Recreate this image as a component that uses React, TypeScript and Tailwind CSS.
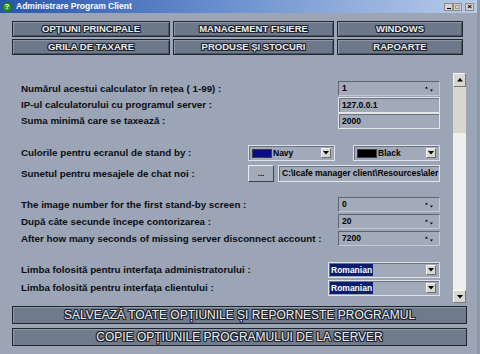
import React from "react";

const OUT =
  "[text-shadow:1px_0_0_#1d222b,-1px_0_0_#1d222b,0_1px_0_#1d222b,0_-1px_0_#1d222b,1px_1px_0_#1d222b,-1px_-1px_0_#1d222b,1px_-1px_0_#1d222b,-1px_1px_0_#1d222b]";

function TabBtn({ children }: { children: React.ReactNode }) {
  return (
    <div
      className={`h-[16px] flex items-center justify-center bg-[#6d788a] border border-[#232830] shadow-[inset_1px_1px_0_#8d97a7,inset_-1px_-1px_0_#4a5361] text-[#e9edf2] font-bold text-[9.5px] leading-none ${OUT}`}
    >
      {children}
    </div>
  );
}

function SpinArrows() {
  return (
    <svg width="10" height="8" viewBox="0 0 10 8" className="shrink-0">
      <path d="M1 3.5 L2.5 1.5 L4 3.5Z" fill="#000" />
      <path d="M6 4.5 L7.5 6.5 L9 4.5Z" fill="#000" />
    </svg>
  );
}

function DropBtn() {
  return (
    <div className="w-[10px] h-[10px] bg-[#d9d8d3] border-t border-l border-[#f4f4f2] border-r border-b border-r-[#6b6b6b] border-b-[#6b6b6b] flex items-center justify-center shrink-0">
      <svg width="6" height="4" viewBox="0 0 6 4">
        <path d="M0 0 L6 0 L3 3.5Z" fill="#000" />
      </svg>
    </div>
  );
}

function Spin({ value }: { value: string }) {
  return (
    <div className="w-[102px] h-[15px] bg-[#a3abba] border-t border-l border-[#5d6573] border-r border-b border-r-[#c4cad4] border-b-[#c4cad4] flex items-center pl-[3px] pr-[5px] justify-between">
      <span className="text-[8.5px] font-bold text-black leading-none">{value}</span>
      <SpinArrows />
    </div>
  );
}

function Edit({ value }: { value: string }) {
  return (
    <div className="w-[102px] h-[16px] bg-[#a2aab9] border border-[#e3e6eb] shadow-[inset_1px_1px_0_#6b7380] flex items-center pl-[3px]">
      <span className="text-[8.5px] font-bold text-black leading-none">{value}</span>
    </div>
  );
}

function ColorCombo({ swatch, label }: { swatch: string; label: string }) {
  return (
    <div className="w-[87px] h-[16px] bg-[#a2aab9] border border-[#dfe3e9] shadow-[inset_1px_1px_0_#6b7380] flex items-center pl-[3px] pr-[3px] gap-[1px]">
      <div className={`w-[20px] h-[9px] ${swatch} border border-[#3a3f48]`} />
      <span className="flex-1 text-[8.5px] font-bold text-black leading-none">{label}</span>
      <DropBtn />
    </div>
  );
}

function LangCombo() {
  return (
    <div className="w-[112px] h-[16px] bg-[#a2aab9] border border-[#dfe3e9] shadow-[inset_1px_1px_0_#6b7380] flex items-center pl-[1px] pr-[3px]">
      <div className="flex-1 flex">
        <span className="bg-[#0a1d6e] text-white text-[8.5px] font-bold leading-none px-[1px] py-[1.5px]">
          Romanian
        </span>
      </div>
      <DropBtn />
    </div>
  );
}

function Label({ children }: { children: React.ReactNode }) {
  return (
    <span className="flex-1 whitespace-nowrap text-[9.8px] font-bold text-[#0b0d12] leading-none">
      {children}
    </span>
  );
}

export default function App() {
  return (
    <div className="w-[480px] h-[354px] overflow-hidden bg-[#9ca5b6] flex flex-col font-['Liberation_Sans',Arial,sans-serif] border-r-[3px] border-[#8e97a8]">
      {/* Title bar */}
      <div className="h-[13px] shrink-0 bg-gradient-to-r from-[#2856ae] via-[#6f93cf] to-[#b8cbe9] flex items-center pl-[2px] pr-[3px]">
        <div className="w-[10px] h-[10px] rounded-full bg-[#2f9a1f] border border-[#1d6a12] flex items-center justify-center text-white text-[8px] font-bold leading-none">
          ?
        </div>
        <span className="ml-[4px] text-white font-bold text-[8.5px] leading-none flex-1">
          Administrare Program Client
        </span>
        <div className="flex gap-[0px] mt-[1px]">
          <div className="w-[9px] h-[8px] bg-[#d6d3cc] border border-[#8a8a8a] flex items-end justify-center pb-[1px]">
            <div className="w-[4px] h-[1px] bg-black" />
          </div>
          <div className="w-[9px] h-[8px] bg-[#d6d3cc] border border-[#8a8a8a] flex items-center justify-center">
            <div className="w-[5px] h-[4px] border border-[#9a9a9a]" />
          </div>
          <div className="ml-[3px] w-[9px] h-[8px] bg-[#d6d3cc] border border-[#8a8a8a] flex items-center justify-center text-black text-[8px] font-bold leading-none">
            ×
          </div>
        </div>
      </div>

      {/* Tabs */}
      <div className="mt-[8px] ml-[12px] grid grid-cols-[158px_161px_126px] gap-x-[3px] gap-y-[2px]">
        <TabBtn>OPȚIUNI PRINCIPALE</TabBtn>
        <TabBtn>MANAGEMENT FISIERE</TabBtn>
        <TabBtn>WINDOWS</TabBtn>
        <TabBtn>GRILA DE TAXARE</TabBtn>
        <TabBtn>PRODUSE ȘI STOCURI</TabBtn>
        <TabBtn>RAPOARTE</TabBtn>
      </div>

      {/* Content */}
      <div className="mt-[18px] h-[230px] flex">
        <div className="flex-1 flex flex-col pl-[21px] pr-[13px] pt-[8px]">
          <div className="h-[15px] flex items-center">
            <Label>Numărul acestui calculator în rețea ( 1-99) :</Label>
            <Spin value="1" />
          </div>
          <div className="mt-[1px] h-[16px] flex items-center">
            <Label>IP-ul calculatorului cu programul server :</Label>
            <Edit value="127.0.0.1" />
          </div>
          <div className="h-[16px] flex items-center">
            <Label>Suma minimă care se taxează :</Label>
            <Edit value="2000" />
          </div>

          <div className="mt-[16px] h-[16px] flex items-center">
            <Label>Culorile pentru ecranul de stand by :</Label>
            <div className="flex gap-[18px]">
              <ColorCombo swatch="bg-[#0a0a8a]" label="Navy" />
              <ColorCombo swatch="bg-black" label="Black" />
            </div>
          </div>
          <div className="mt-[4px] h-[17px] flex items-center">
            <Label>Sunetul pentru mesajele de chat noi :</Label>
            <div className="flex gap-[4px]">
              <div className="w-[26px] h-[17px] bg-[#a3abba] border-t border-l border-[#e8ebf0] border-r border-b border-r-[#3c424c] border-b-[#3c424c] flex items-end justify-center pb-[3px] text-[8px] font-bold leading-none text-black">
                ...
              </div>
              <div className="w-[162px] h-[17px] bg-[#a2aab9] border border-[#e3e6eb] shadow-[inset_1px_1px_0_#6b7380] flex items-center pl-[3px] overflow-hidden">
                <span className="text-[8.5px] font-bold text-black leading-none whitespace-nowrap">
                  C:\Icafe manager client\Resources\aler
                </span>
              </div>
            </div>
          </div>

          <div className="mt-[15px] h-[15px] flex items-center">
            <Label>The image number for the first stand-by screen :</Label>
            <Spin value="0" />
          </div>
          <div className="mt-[2px] h-[15px] flex items-center">
            <Label>După câte secunde începe contorizarea :</Label>
            <Spin value="20" />
          </div>
          <div className="mt-[2px] h-[15px] flex items-center">
            <Label>After how many seconds of missing server disconnect account :</Label>
            <Spin value="7200" />
          </div>

          <div className="mt-[16px] h-[16px] flex items-center">
            <Label>Limba folosită pentru interfața administratorului :</Label>
            <LangCombo />
          </div>
          <div className="mt-[2px] h-[16px] flex items-center">
            <Label>Limba folosită pentru interfața clientului :</Label>
            <LangCombo />
          </div>
        </div>

        {/* Scrollbar */}
        <div className="w-[13px] mr-[11px] flex flex-col bg-[#efefed]">
          <div className="h-[14px] bg-[#d9d7d1] border-t border-l border-[#f6f6f4] border-r border-b border-r-[#777] border-b-[#777] flex items-center justify-center">
            <svg width="6" height="4" viewBox="0 0 6 4">
              <path d="M0 3.5 L6 3.5 L3 0Z" fill="#000" />
            </svg>
          </div>
          <div className="h-[46px] bg-[#d9d6cf]" />
          <div className="flex-1" />
          <div className="h-[13px] bg-[#d9d7d1] border-t border-l border-[#f6f6f4] border-r border-b border-r-[#777] border-b-[#777] flex items-center justify-center">
            <svg width="6" height="4" viewBox="0 0 6 4">
              <path d="M0 0 L6 0 L3 3.5Z" fill="#000" />
            </svg>
          </div>
        </div>
      </div>

      {/* Bottom buttons */}
      <div className="mt-[3px] ml-[12px] mr-[10px] flex flex-col gap-[4px]">
        <div
          className={`h-[18px] flex items-center justify-center bg-[#6f7a8b] border border-[#20252d] shadow-[inset_1px_1px_0_#8f99a8] text-[#eef1f5] text-[12px] leading-none ${OUT}`}
        >
          SALVEAZĂ TOATE OPȚIUNILE ȘI REPORNESTE PROGRAMUL
        </div>
        <div
          className={`h-[18px] flex items-center justify-center bg-[#6f7a8b] border border-[#20252d] shadow-[inset_1px_1px_0_#8f99a8] text-[#eef1f5] text-[12px] leading-none ${OUT}`}
        >
          COPIE OPȚIUNILE PROGRAMULUI DE LA SERVER
        </div>
      </div>
    </div>
  );
}
